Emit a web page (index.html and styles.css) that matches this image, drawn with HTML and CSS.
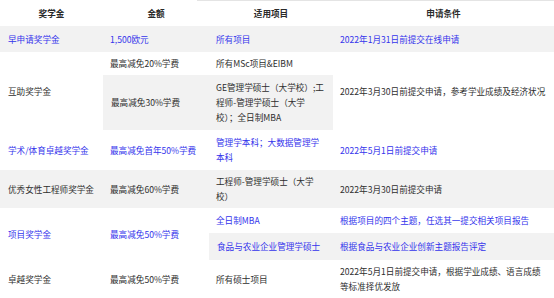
FILE: index.html
```html
<!DOCTYPE html>
<html lang="zh-CN">
<head>
<meta charset="utf-8">
<title>奖学金</title>
<link rel="stylesheet" href="styles.css">
</head>
<body>
<div class="wrap">
<table class="sch">
  <colgroup>
    <col class="c1"><col class="c2"><col class="c3"><col class="c4">
  </colgroup>
  <thead>
    <tr class="h-head"><th>奖学金</th><th>金额</th><th>适用项目</th><th>申请条件</th></tr>
  </thead>
  <tbody>
    <tr class="gray blue h26"><td>早申请奖学金</td><td>1,500欧元</td><td>所有项目</td><td>2022年1月31日前提交在线申请</td></tr>
    <tr class="h23"><td rowspan="2">互助奖学金</td><td>最高减免20%学费</td><td>所有MSc项目&amp;EIBM</td><td rowspan="2">2022年3月30日前提交申请，参考学业成绩及经济状况</td></tr>
    <tr class="gray h55"><td>最高减免30%学费</td><td>GE管理学硕士（大学校）;工程师-管理学硕士（大学校）；全日制MBA</td></tr>
    <tr class="blue h40"><td>学术/体育卓越奖学金</td><td>最高减免首年50%学费</td><td>管理学本科；大数据管理学本科</td><td>2022年5月1日前提交申请</td></tr>
    <tr class="gray h38"><td>优秀女性工程师奖学金</td><td>最高减免60%学费</td><td>工程师-管理学硕士（大学校）</td><td>2022年3月30日前提交申请</td></tr>
    <tr class="blue h25"><td rowspan="2">项目奖学金</td><td rowspan="2">最高减免50%学费</td><td>全日制MBA</td><td>根据项目的四个主题，任选其一提交相关项目报告</td></tr>
    <tr class="gray blue h27"><td>食品与农业企业管理学硕士</td><td>根据食品与农业企业创新主题报告评定</td></tr>
    <tr class="h38"><td>卓越奖学金</td><td>最高减免50%学费</td><td>所有硕士项目</td><td>2022年5月1日前提交申请，根据学业成绩、语言成绩等标准择优发放</td></tr>
  </tbody>
</table>
</div>
</body>
</html>
```
FILE: styles.css
```css
html, body {
  margin: 0;
  padding: 0;
  background: #ffffff;
}
body {
  font-family: "Noto Sans CJK SC", "Noto Sans", sans-serif;
  font-size: 8.6px;
  color: #2e2e2e;
}
.wrap {
  position: relative;
  width: 554px;
}
.wrap::before {
  content: "";
  position: absolute;
  top: 0;
  left: 197px;
  right: 0;
  height: 1px;
  background: #e4e4e4;
}
.sch {
  width: 554px;
  border-collapse: collapse;
  table-layout: fixed;
}
.c1 { width: 103px; }
.c2 { width: 106px; }
.c3 { width: 124px; }
.c4 { width: 221px; }
.sch th,
.sch td {
  padding: 0 7px;
  line-height: 14.7px;
  vertical-align: middle;
  text-align: left;
  font-weight: normal;
}
.sch td:first-child { padding-left: 8px; }
.sch th {
  text-align: center;
  font-weight: bold;
  color: #2a2a2a;
}
.sch tr.gray td { background: #f2f2f2; }
.sch tr.blue td { color: #3434ec; }
.h-head { height: 26px; }
.h26 { height: 26px; }
.h23 { height: 23px; }
.h55 { height: 55px; }
.h40 { height: 40px; }
.h38 { height: 38px; }
.h25 { height: 25px; }
.h27 { height: 27px; }
```
